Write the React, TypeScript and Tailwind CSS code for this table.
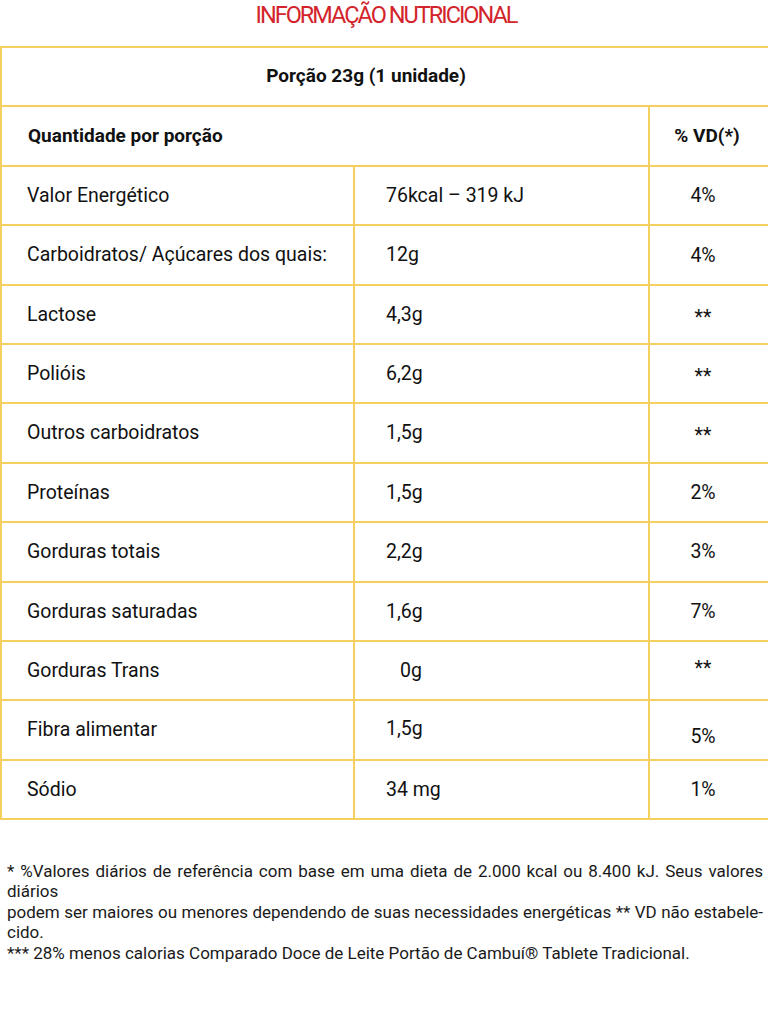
const rows: { label: string; value: string; vd: string; valueClass?: string; vdClass?: string }[] = [
  { label: 'Valor Energético', value: '76kcal – 319 kJ', vd: '4%' },
  { label: 'Carboidratos/ Açúcares dos quais:', value: '12g', vd: '4%', vdClass: 'pt-[2px]' },
  { label: 'Lactose', value: '4,3g', vd: '**', vdClass: 'pt-[6px]' },
  { label: 'Polióis', value: '6,2g', vd: '**', vdClass: 'pt-[6px]' },
  { label: 'Outros carboidratos', value: '1,5g', vd: '**', vdClass: 'pt-[6px]' },
  { label: 'Proteínas', value: '1,5g', vd: '2%' },
  { label: 'Gorduras totais', value: '2,2g', vd: '3%' },
  { label: 'Gorduras saturadas', value: '1,6g', vd: '7%' },
  { label: 'Gorduras Trans', value: '0g', vd: '**', valueClass: 'pl-[45px]', vdClass: 'pb-[4px]' },
  { label: 'Fibra alimentar', value: '1,5g', vd: '5%', valueClass: 'pb-[2px]', vdClass: 'pt-[14px]' },
  { label: 'Sódio', value: '34 mg', vd: '1%' },
];

const cell = 'border-2 border-[#f5d061] h-[59.4px] p-0 align-middle';

export default function App() {
  return (
    <div className="min-h-screen w-[768px] bg-white text-[#111] font-['Roboto',sans-serif]">
      <div className="flex h-[31px] items-center justify-center pt-[1px] pl-[4px]">
        <h1 className="text-[23.5px] font-normal leading-none tracking-[-0.085em] text-[#d3242c]">INFORMAÇÃO NUTRICIONAL</h1>
      </div>

      <div className="mt-[15px]">
        <table className="w-[768px] border-collapse table-fixed text-[19.5px]">
          <colgroup>
            <col className="w-[353px]" />
            <col className="w-[295px]" />
            <col className="w-[120px]" />
          </colgroup>
          <tbody>
            <tr>
              <td colSpan={3} className={`${cell} pr-[38px] text-center text-[19px] font-bold`}>
                Porção 23g (1 unidade)
              </td>
            </tr>
            <tr>
              <td colSpan={2} className={`${cell} pl-[26px] text-[19px] font-bold`}>
                Quantidade por porção
              </td>
              <td className={`${cell} pr-[4px] text-center text-[19px] font-bold`}>% VD(*)</td>
            </tr>
            {rows.map((row) => (
              <tr key={row.label}>
                <td className={`${cell} pl-[25px]`}>{row.label}</td>
                <td className={`${cell} pl-[31px] ${row.valueClass ?? ''}`}>{row.value}</td>
                <td className={`${cell} pr-[12px] text-center ${row.vdClass ?? ''}`}>{row.vd}</td>
              </tr>
            ))}
          </tbody>
        </table>
      </div>

      <div className="mt-[41px] pl-[7px] pr-[5px] text-[17px] leading-[20.4px] text-[#1a1a1a]">
        <p className="text-justify [text-align-last:justify]">
          * %Valores diários de referência com base em uma dieta de 2.000 kcal ou 8.400 kJ. Seus valores
        </p>
        <p>diários</p>
        <p className="text-justify [text-align-last:justify]">
          podem ser maiores ou menores dependendo de suas necessidades energéticas ** VD não estabele-
        </p>
        <p>cido.</p>
        <p className="whitespace-nowrap">
          *** 28% menos calorias Comparado Doce de Leite Portão de Cambuí® Tablete Tradicional.
        </p>
      </div>
    </div>
  );
}
